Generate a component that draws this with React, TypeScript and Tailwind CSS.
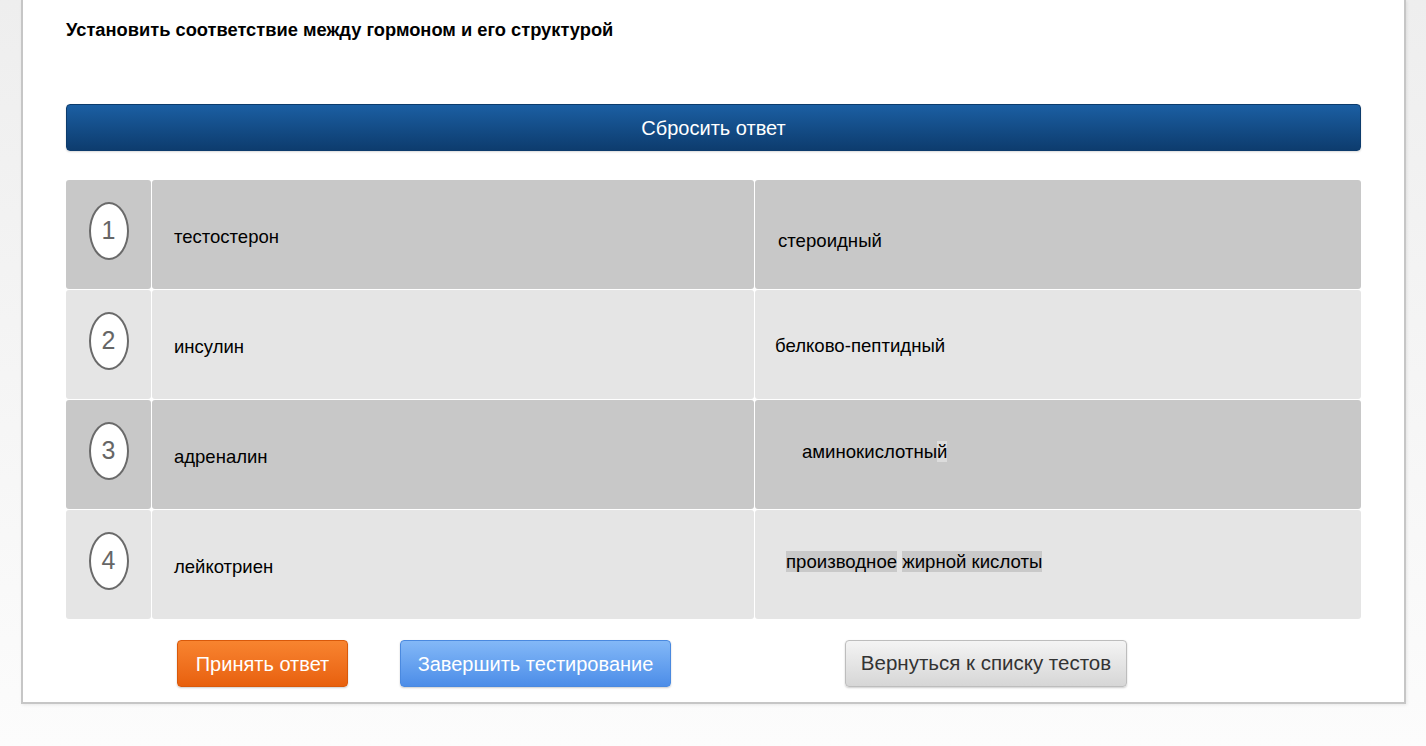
const rows = [
  {
    n: 1,
    left: 'тестостерон',
    right: 'стероидный',
    bg: 'bg-[#c8c8c8]',
    rightCls: 'pl-[23px] pt-[50px]',
    mark: false,
  },
  {
    n: 2,
    left: 'инсулин',
    right: 'белково-пептидный',
    bg: 'bg-[#e5e5e5]',
    rightCls: 'pl-[20px] pt-[45px]',
    mark: false,
  },
  {
    n: 3,
    left: 'адреналин',
    right: 'аминокислотный',
    bg: 'bg-[#c8c8c8]',
    rightCls: 'pl-[47px] pt-[41px]',
    mark: false,
  },
  {
    n: 4,
    left: 'лейкотриен',
    right: 'производное жирной кислоты',
    bg: 'bg-[#e5e5e5]',
    rightCls: 'pl-[31px] pt-[41px]',
    mark: true,
  },
];

function App() {
  return (
    <div className="min-h-screen bg-gradient-to-b from-[#eeeeee] to-[#fcfcfc] pl-[21px] pr-[20px] font-['Liberation_Sans',Arial,sans-serif]">
      {/* Card */}
      <div className="bg-white border-x-2 border-b-2 border-[#c6c6c6] shadow-[1px_1px_3px_rgba(0,0,0,0.08)] px-[43px] pt-[19px] pb-[15px]">
        <h1 className="text-[18.3px] leading-[22px] font-bold text-black">
          Установить соответствие между гормоном и его структурой
        </h1>

        <button className="mt-[63px] w-full h-[47px] rounded-[4px] border border-[#0c3b6c] bg-gradient-to-b from-[#1b5fa3] to-[#0d3c6e] text-white text-[20px] shadow-[0_1px_2px_rgba(0,0,0,0.15)]">
          Сбросить ответ
        </button>

        {/* Matching table */}
        <div className="mt-[29px] flex flex-col gap-px bg-white">
          {rows.map((r) => (
            <div key={r.n} className="grid grid-cols-[85px_602px_1fr] gap-px h-[109px]">
              <div className={`${r.bg} rounded-[3px] flex justify-center pt-[22px]`}>
                <div className="w-[40px] h-[58px] rounded-[50%] border-2 border-[#6a6a6a] bg-white flex items-center justify-center text-[25px] text-[#666666]">
                  {r.n}
                </div>
              </div>
              <div className={`${r.bg} rounded-[3px] flex items-center pl-[22px] pt-[4px] text-[18.5px] text-black`}>
                {r.left}
              </div>
              <div className={`${r.bg} rounded-[3px] ${r.rightCls} text-[18.6px] leading-[22px] text-black`}>
                {r.mark ? (
                  <span>
                    <span className="bg-[#c9c9c9]">производное</span>{' '}
                    <span className="bg-[#c9c9c9]">жирной кислоты</span>
                  </span>
                ) : r.n === 3 ? (
                  <span>
                    аминокислотны<span className="bg-[#dcdcdc]">й </span>
                  </span>
                ) : (
                  r.right
                )}
              </div>
            </div>
          ))}
        </div>

        {/* Actions */}
        <div className="mt-[21px] flex h-[47px]">
          <button className="ml-[111px] w-[171px] h-[47px] rounded-[4px] border border-[#d9590a] bg-gradient-to-b from-[#f8842f] to-[#e8600c] text-white text-[20px] shadow-[0_1px_2px_rgba(0,0,0,0.2)]">
            Принять ответ
          </button>
          <button className="ml-[52px] w-[271px] h-[47px] rounded-[4px] border border-[#4a89df] bg-gradient-to-b from-[#83b8f7] to-[#4c8de8] text-white text-[20px] shadow-[0_1px_2px_rgba(0,0,0,0.2)]">
            Завершить тестирование
          </button>
          <button className="ml-[174px] w-[282px] h-[47px] rounded-[4px] border border-[#bdbdbd] bg-gradient-to-b from-[#f4f4f4] to-[#d6d6d6] text-[#333333] text-[20.5px] shadow-[0_1px_2px_rgba(0,0,0,0.2)]">
            Вернуться к списку тестов
          </button>
        </div>
      </div>
    </div>
  );
}

export default App;
